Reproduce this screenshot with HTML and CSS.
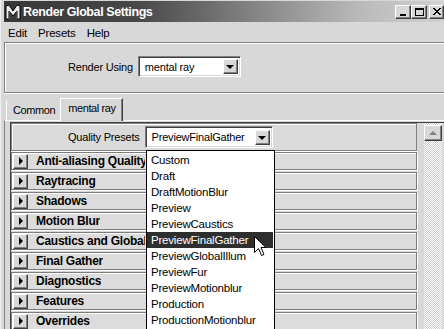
FILE: index.html
```html
<!DOCTYPE html>
<html>
<head>
<meta charset="utf-8">
<title>Render Global Settings</title>
<link rel="stylesheet" href="styles.css">
</head>
<body>
<div class="window">
  <div class="titlebar">
    <svg class="app-icon" width="16" height="16" viewBox="0 0 16 16">
      <path d="M1 15 L1 2 L4 1 L8 7 L12 1 L15 2 L15 15 L12 15 L12 7 L8 12 L4 7 L4 15 Z" fill="#ececec" stroke="#000" stroke-width="1"/>
      <path d="M4 7 L4 15 M12 7 L12 15" stroke="#777" stroke-width="1"/>
    </svg>
    <span class="title">Render Global Settings</span>
    <div class="tb-buttons">
      <div class="tb-btn"><span class="g-min"></span></div>
      <div class="tb-btn"><span class="g-max"></span></div>
      <div class="tb-btn close">
        <svg width="8" height="7" viewBox="0 0 8 7"><path d="M0 0 L7 7 M1 0 L8 7 M7 0 L0 7 M8 0 L1 7" stroke="#000" stroke-width="1"/></svg>
      </div>
    </div>
  </div>
  <div class="menubar">
    <span class="menu-item m-edit">Edit</span>
    <span class="menu-item m-presets">Presets</span>
    <span class="menu-item m-help">Help</span>
  </div>
  <div class="top-panel">
    <span class="label">Render Using</span>
    <div class="combo combo-render">
      <span class="combo-text">mental ray</span>
      <div class="combo-btn"><span class="down-tri"></span></div>
    </div>
  </div>
  <div class="tabs">
    <div class="tab">Common</div>
    <div class="tab active">mental ray</div>
  </div>
  <div class="tab-body">
    <div class="frame">
      <div class="rows">
        <div class="preset-box">
          <span class="label preset-label">Quality Presets</span>
          <div class="combo combo-preset">
            <span class="combo-text">PreviewFinalGather</span>
            <div class="combo-btn"><span class="down-tri"></span></div>
          </div>
        </div>
        <div class="row"><div class="exp-btn"><span class="right-tri"></span></div><span class="row-label">Anti-aliasing Quality</span></div>
        <div class="row"><div class="exp-btn"><span class="right-tri"></span></div><span class="row-label">Raytracing</span></div>
        <div class="row"><div class="exp-btn"><span class="right-tri"></span></div><span class="row-label">Shadows</span></div>
        <div class="row"><div class="exp-btn"><span class="right-tri"></span></div><span class="row-label">Motion Blur</span></div>
        <div class="row"><div class="exp-btn"><span class="right-tri"></span></div><span class="row-label">Caustics and Global Illumination</span></div>
        <div class="row"><div class="exp-btn"><span class="right-tri"></span></div><span class="row-label">Final Gather</span></div>
        <div class="row"><div class="exp-btn"><span class="right-tri"></span></div><span class="row-label">Diagnostics</span></div>
        <div class="row"><div class="exp-btn"><span class="right-tri"></span></div><span class="row-label">Features</span></div>
        <div class="row"><div class="exp-btn"><span class="right-tri"></span></div><span class="row-label">Overrides</span></div>
      </div>
      <div class="scrollbar">
        <div class="sb-btn"><span class="up-tri"></span></div>
        <div class="sb-track"></div>
      </div>
    </div>
  </div>

  <ul class="dropdown-list">
    <li>Custom</li>
    <li>Draft</li>
    <li>DraftMotionBlur</li>
    <li>Preview</li>
    <li>PreviewCaustics</li>
    <li class="selected">PreviewFinalGather</li>
    <li>PreviewGlobalIllum</li>
    <li>PreviewFur</li>
    <li>PreviewMotionblur</li>
    <li>Production</li>
    <li>ProductionMotionblur</li>
  </ul>

  <svg class="cursor" width="13" height="21" viewBox="0 0 13 21">
    <path d="M0.5 0.5 L0.5 16.5 L4.5 12.5 L7.5 19.5 L10 18.5 L7 11.5 L12 11.5 Z" fill="#fff" stroke="#000" stroke-width="1" stroke-linejoin="miter"/>
  </svg>
</div>
</body>
</html>
```

FILE: styles.css
```css
* { box-sizing: border-box; }

body {
  margin: 0;
  background: #d8d8d8;
  font-family: "Liberation Sans", Arial, sans-serif;
  font-size: 11px;
  letter-spacing: -0.2px;
  color: #000;
}

.window {
  position: relative;
  width: 444px;
  height: 329px;
  overflow: hidden;
  background: #d8d8d8;
  padding: 1px 0 0 3px;
  display: flex;
  flex-direction: column;
  border-left: 1px solid #f0f0f0;
}

/* ---- Title bar ---- */
.titlebar {
  height: 21px;
  flex: none;
  display: flex;
  align-items: center;
  padding-left: 1px;
  background: linear-gradient(90deg, #383838 0%, #474747 30%, #808080 55%, #b8b8b8 80%, #d2d2d2 100%);
}

.app-icon { flex: none; margin-right: 2px; }

.title {
  color: #fff;
  font-weight: bold;
  font-size: 12.5px;
  letter-spacing: -0.4px;
  flex: 1;
}

.tb-buttons {
  display: flex;
  align-items: center;
}

.tb-btn {
  width: 16px;
  height: 14px;
  background: #d8d8d8;
  border: 1px solid;
  border-color: #fff #404040 #404040 #fff;
  box-shadow: inset -1px -1px 0 #808080;
  display: flex;
  align-items: center;
  justify-content: center;
  position: relative;
}

.tb-btn.close { margin-left: 2px; width: 15px; }

.g-min {
  position: absolute;
  left: 4px;
  bottom: 2px;
  width: 6px;
  height: 2px;
  background: #000;
}

.g-max {
  width: 9px;
  height: 8px;
  border: 1px solid #000;
  border-top-width: 2px;
}

/* ---- Menu bar ---- */
.menubar {
  height: 20px;
  flex: none;
  display: flex;
  align-items: center;
  font-size: 11.5px;
  padding-top: 2px;
}

.m-edit { margin-left: 4px; }
.m-presets { margin-left: 11px; }
.m-help { margin-left: 11px; }

/* ---- Top panel ---- */
.top-panel {
  height: 51px;
  flex: none;
  border-top: 1px solid #808080;
  border-left: 1px solid #808080;
  border-bottom: 1px solid #808080;
  box-shadow: inset 1px 1px 0 #fff, 0 1px 0 #fff;
  display: flex;
  align-items: center;
  padding-left: 63px;
  padding-bottom: 2px;
}

.label { white-space: nowrap; }

.combo {
  background: #fff;
  border: 1px solid;
  border-color: #808080 #fff #fff #808080;
  box-shadow: inset 1px 1px 0 #404040, inset -1px -1px 0 #d8d8d8;
  display: flex;
  align-items: center;
  padding: 2px 2px 2px 6px;
}

.combo-text { flex: 1; white-space: nowrap; }

.combo-render {
  margin-left: 5px;
  width: 103px;
  height: 21px;
}

.combo-btn {
  width: 15px;
  height: 15px;
  background: #d8d8d8;
  border: 1px solid;
  border-color: #fff #404040 #404040 #fff;
  box-shadow: inset -1px -1px 0 #808080;
  display: flex;
  align-items: center;
  justify-content: center;
}

.down-tri {
  width: 0;
  height: 0;
  border-left: 4px solid transparent;
  border-right: 4px solid transparent;
  border-top: 4px solid #000;
  margin-top: 1px;
}

/* ---- Tabs ---- */
.tabs {
  height: 26px;
  flex: none;
  display: flex;
  align-items: flex-end;
  padding-left: 2px;
  margin-top: 1px;
}

.tab {
  height: 20px;
  padding: 4px 5px 0 6px;
  border-left: 1px solid #fff;
  font-size: 11px;
  letter-spacing: -0.4px;
}

.tab.active {
  height: 23px;
  padding: 3px 6px 0 7px;
  border: 1px solid;
  border-bottom: none;
  border-color: #fff #404040 transparent #fff;
  box-shadow: inset -1px 0 0 #808080;
  background: #d8d8d8;
  margin-bottom: -1px;
  position: relative;
  z-index: 1;
}

/* ---- Tab body ---- */
.tab-body {
  flex: 1;
  border-top: 1px solid #fff;
  border-left: 1px solid #808080;
  padding: 1px 0 0 5px;
  min-height: 0;
}

.frame {
  height: 100%;
  border-top: 1px solid #404040;
  border-left: 1px solid #404040;
  display: flex;
}

.rows {
  width: 406px;
  flex: none;
  display: flex;
  flex-direction: column;
  gap: 2px;
}

.preset-box {
  height: 28px;
  flex: none;
  border: 1px solid #808080;
  box-shadow: inset 1px 1px 0 #fff, 0 1px 0 #fff;
  background: #dadada;
  display: flex;
  align-items: center;
  padding-left: 56px;
  margin-bottom: -1px;
}

.combo-preset {
  margin-left: 5px;
  width: 128px;
  height: 22px;
}

.row {
  height: 18px;
  flex: none;
  border: 1px solid #7c7c7c;
  box-shadow: inset 1px 1px 0 #fff, 1px 1px 0 #fff;
  background: #dcdcdc;
  display: flex;
  align-items: center;
  padding-left: 1px;
}

.exp-btn {
  width: 15px;
  height: 15px;
  flex: none;
  background: #d8d8d8;
  border: 1px solid;
  border-color: #fff #404040 #404040 #fff;
  box-shadow: inset -1px -1px 0 #808080;
  display: flex;
  align-items: center;
  justify-content: center;
}

.right-tri {
  width: 0;
  height: 0;
  border-top: 4px solid transparent;
  border-bottom: 4px solid transparent;
  border-left: 4px solid #000;
  margin-left: 1px;
}

.row-label {
  margin-left: 8px;
  max-width: 109px;
  font-weight: bold;
  font-size: 12px;
  letter-spacing: -0.25px;
  white-space: nowrap;
  overflow: hidden;
}

/* ---- Scrollbar ---- */
.scrollbar {
  width: 18px;
  flex: none;
  margin-left: 7px;
  display: flex;
  flex-direction: column;
  padding-top: 2px;
  background: repeating-conic-gradient(#ffffff 0 25%, #d0d0d0 0 50%) 0 0 / 2px 2px;
}

.sb-btn {
  height: 16px;
  flex: none;
  background: #d8d8d8;
  border: 1px solid;
  border-color: #fff #404040 #404040 #fff;
  box-shadow: inset -1px -1px 0 #808080;
  display: flex;
  align-items: center;
  justify-content: center;
}

.up-tri {
  width: 0;
  height: 0;
  border-left: 4px solid transparent;
  border-right: 4px solid transparent;
  border-bottom: 4px solid #808080;
}

.sb-track { flex: 1; }

/* ---- Dropdown list (overlay) ---- */
.dropdown-list {
  position: absolute;
  left: 145px;
  top: 150px;
  width: 129px;
  height: 180px;
  margin: 0;
  padding: 1px 0 0 0;
  list-style: none;
  background: #fff;
  border: 1px solid #000;
}

.dropdown-list li {
  height: 16px;
  line-height: 16px;
  padding-left: 4px;
  font-size: 11.5px;
  white-space: nowrap;
}

.dropdown-list li.selected {
  background: #2e2e2e;
  color: #fff;
  margin-right: 1px;
}

.cursor {
  position: absolute;
  left: 253px;
  top: 236px;
}
```
